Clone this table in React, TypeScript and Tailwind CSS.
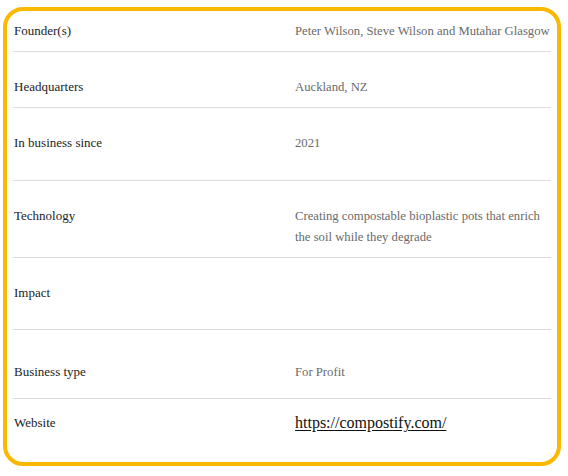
import React from "react";

function Row({
  label,
  children,
  cls,
  last,
}: {
  label: string;
  children?: React.ReactNode;
  cls: string;
  last?: boolean;
}) {
  return (
    <div className={`flex items-start ${last ? "" : "border-b border-[#dcdcdc]"} ${cls}`}>
      <div className="w-[282px] shrink-0 pl-px text-[13px] leading-[20px] text-[#1c1c1c]">{label}</div>
      <div className="flex-1 text-[12.7px] leading-[21px] text-[#6a6a6a]">{children}</div>
    </div>
  );
}

export default function App() {
  return (
    <div className="w-[568px] h-[476px] bg-white pt-[7px] pl-[3px]" style={{ fontFamily: '"Liberation Serif", serif' }}>
      <div className="w-[558px] h-[459px] border-4 border-[#fbb800] rounded-[20px] px-[6px] bg-white">
        <Row label="Founder(s)" cls="pt-[10px] pb-[10px] h-[41px]">
          <span className="block leading-[20px]">Peter Wilson, Steve Wilson and Mutahar Glasgow</span>
        </Row>
        <Row label="Headquarters" cls="pt-[25px] h-[56px]">
          <span className="block leading-[20px]">Auckland, NZ</span>
        </Row>
        <Row label="In business since" cls="pt-[25px] h-[73px]">
          <span className="block leading-[20px]">2021</span>
        </Row>
        <Row label="Technology" cls="pt-[25px] h-[77px]">
          <span className="block -mt-[0.5px]">
            Creating compostable bioplastic pots that enrich
            <br />
            the soil while they degrade
          </span>
        </Row>
        <Row label="Impact" cls="pt-[25px] h-[72px]" />
        <Row label="Business type" cls="pt-[32px] h-[69px]">
          <span className="block leading-[20px]">For Profit</span>
        </Row>
        <Row label="Website" cls="pt-[14px]" last>
          <a
            href="#"
            className="block leading-[20px] text-[16px] text-[#111] underline underline-offset-2"
          >
            https://compostify.com/
          </a>
        </Row>
      </div>
    </div>
  );
}
